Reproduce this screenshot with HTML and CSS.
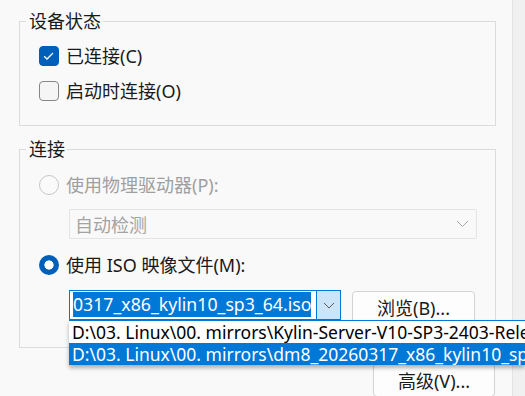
FILE: index.html
```html
<!DOCTYPE html>
<html lang="zh-CN">
<head>
<meta charset="utf-8">
<title>CD/DVD</title>
<link rel="stylesheet" href="styles.css">
</head>
<body>
<div class="window">
  <div class="panel">
    <fieldset class="group g1">
      <legend>设备状态</legend>
      <div class="body">
        <label class="row"><span class="cb on"><svg width="20" height="20" viewBox="0 0 20 20"><polyline points="5.2,10.3 8,13 14,7" fill="none" stroke="#fff" stroke-width="1.3"/></svg></span><span>已连接(C)</span></label>
        <label class="row"><span class="cb"></span><span>启动时连接(O)</span></label>
      </div>
    </fieldset>
    <fieldset class="group g2">
      <legend>连接</legend>
      <div class="body">
        <div class="row disabled r1"><span class="radio"></span><span>使用物理驱动器(P):</span></div>
        <div class="combo">
          <span>自动检测</span>
          <svg width="13" height="8" viewBox="0 0 13 8"><polyline points="1,1 6.5,6.5 12,1" fill="none" stroke="#a8a8a8" stroke-width="1"/></svg>
        </div>
        <div class="row r2"><span class="radio on"></span><span>使用 ISO 映像文件(M):</span></div>
        <div class="iso-row">
          <div class="edit-combo">
            <div class="edit"><span class="sel">0317_x86_kylin10_sp3_64.iso</span></div>
            <div class="drop-btn"><svg width="12" height="7" viewBox="0 0 12 7"><polyline points="1,1 6,6 11,1" fill="none" stroke="#5c5c5c" stroke-width="1"/></svg></div>
            <ul class="list">
              <li>D:\03. Linux\00. mirrors\Kylin-Server-V10-SP3-2403-Release-x86_64.iso</li>
              <li class="hl">D:\03. Linux\00. mirrors\dm8_20260317_x86_kylin10_sp3_64.iso</li>
            </ul>
          </div>
          <button class="btn browse" type="button">浏览(B)...</button>
        </div>
      </div>
    </fieldset>
    <div class="actions">
      <button class="btn adv" type="button">高级(V)...</button>
    </div>
  </div>
  <div class="strip"></div>
</div>
</body>
</html>
```
FILE: styles.css
```css
* { box-sizing: border-box; }
html, body { margin: 0; padding: 0; }
body {
  width: 525px;
  height: 396px;
  overflow: hidden;
  background: #f9f9f9;
  font-family: "Noto Sans", "Noto Sans CJK SC", sans-serif;
  font-size: 18px;
  color: #1a1a1a;
}
.window { display: flex; height: 396px; }
.panel {
  width: 513px;
  flex: none;
  border-right: 1px solid #e3e3e3;
  padding: 10px 16px 0 19px;
  display: flex;
  flex-direction: column;
}
.strip { flex: 1; background: #f0f0f0; }

.group {
  margin: 0;
  min-width: 0;
  border: 1px solid #dcdcdc;
  padding: 12px 18px 22px 19px;
}
.group legend {
  margin-left: -13px;
  padding: 0 2px 0 3px;
  font-size: 18px;
  line-height: 22px;
  color: #1a1a1a;
}
.body { display: flex; flex-direction: column; }

.row {
  display: flex;
  align-items: center;
  gap: 7px;
  height: 24px;
  line-height: 24px;
  white-space: nowrap;
}
.g1 .row + .row { margin-top: 11px; }

.cb {
  width: 20px;
  height: 20px;
  flex: none;
  border: 1px solid #868686;
  border-radius: 4px;
  background: #f5f5f5;
  display: flex;
}
.cb svg { margin: -1px; }
.cb.on { background: #005fb8; border-color: #005fb8; }

.radio {
  width: 20px;
  height: 20px;
  flex: none;
  border-radius: 50%;
  border: 1px solid #c6c6c6;
  background: #fafafa;
}
.radio.on {
  border: none;
  background: radial-gradient(circle at center, #fff 0 4.3px, #005fb8 4.9px);
}

.g2 { margin-top: 12px; padding-top: 13px; padding-bottom: 24px; }
.disabled { color: #9f9f9f; }

.combo {
  margin-top: 12px;
  margin-left: 30px;
  width: 408px;
  height: 30px;
  border: 1px solid #e4e4e4;
  border-radius: 2px;
  display: flex;
  align-items: center;
  justify-content: space-between;
  padding: 0 7px 0 5px;
  color: #a3a3a3;
}
.r2 { margin-top: 14px; }

.iso-row {
  display: flex;
  align-items: flex-start;
  gap: 11px;
  margin-top: 13px;
  margin-left: 30px;
}
.edit-combo {
  position: relative;
  display: flex;
  width: 272px;
  height: 30px;
  flex: none;
}
.edit {
  flex: 1;
  min-width: 0;
  border: 1px solid #0078d7;
  border-right: none;
  background: #fff;
  padding: 1px 0 0 3px;
  overflow: hidden;
  white-space: nowrap;
  line-height: 25px;
}
.sel {
  display: inline-block;
  background: #0078d7;
  color: #fff;
  font-size: 17.7px;
  line-height: 25px;
}
.drop-btn {
  width: 25px;
  flex: none;
  border: 1px solid #0078d7;
  background: #cce4f7;
  display: flex;
  align-items: center;
  justify-content: center;
}
.list {
  position: absolute;
  top: 30px;
  left: 0;
  width: 456px;
  margin: 0;
  padding: 0;
  list-style: none;
  background: #fff;
  border-top: 1px solid #0078d7;
  box-shadow: 0 3px 4px rgba(0, 0, 0, 0.3);
  z-index: 2;
  font-size: 17.5px;
  color: #000;
}
.list li {
  height: 22px;
  line-height: 22px;
  padding-left: 3px;
  white-space: nowrap;
  overflow: hidden;
}
.list li.hl { background: #0078d7; color: #fff; }

.btn {
  font: inherit;
  color: #1a1a1a;
  background: #fdfdfd;
  border: 1px solid #d3d3d3;
  border-radius: 4px;
  padding: 0;
}
.browse { width: 123px; height: 32px; margin-top: 1px; }
.actions {
  display: flex;
  justify-content: flex-end;
  margin-top: 15px;
  padding-right: 1px;
}
.adv { width: 122px; height: 34px; }
```
